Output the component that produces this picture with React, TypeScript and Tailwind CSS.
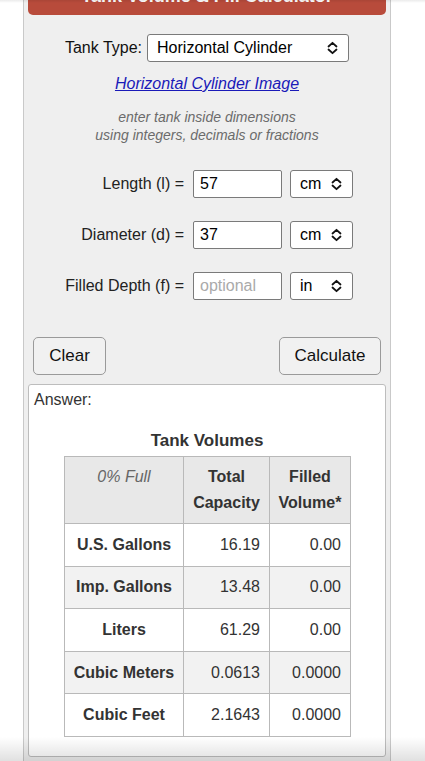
import React from "react";

const font = { fontFamily: '"Liberation Sans", Arial, sans-serif' };

function Chevrons() {
  return (
    <svg width="11" height="14" viewBox="0 0 11 14" fill="none" className="shrink-0">
      <path d="M1.5 5.5 L5.5 1.8 L9.5 5.5" stroke="#111" strokeWidth="1.8" strokeLinecap="round" strokeLinejoin="round" />
      <path d="M1.5 8.5 L5.5 12.2 L9.5 8.5" stroke="#111" strokeWidth="1.8" strokeLinecap="round" strokeLinejoin="round" />
    </svg>
  );
}

function FakeSelect({ value, className }: { value: string; className: string }) {
  return (
    <div
      className={`flex items-center justify-between bg-white border border-[#7a7a7a] rounded-[3px] text-[16px] text-black pl-[9px] pr-[10px] ${className}`}
    >
      <span>{value}</span>
      <Chevrons />
    </div>
  );
}

function DimRow({ label, value, unit }: { label: string; value: string; unit: string }) {
  return (
    <div className="flex items-center h-[28px] pl-[30px]">
      <span className="w-[130px] text-right text-[16px] text-[#222]">{label}</span>
      <div className="ml-[9px] w-[89px] h-[28px] bg-white border border-[#7a7a7a] rounded-[2px] flex items-center pl-[6px] text-[16px]">
        {value ? (
          <span className="text-black">{value}</span>
        ) : (
          <span className="text-[#aaaaaa]">optional</span>
        )}
      </div>
      <FakeSelect value={unit} className="ml-[8px] w-[63px] h-[28px]" />
    </div>
  );
}

const rows = [
  { name: "U.S. Gallons", total: "16.19", filled: "0.00", bg: "bg-white" },
  { name: "Imp. Gallons", total: "13.48", filled: "0.00", bg: "bg-[#f2f2f2]" },
  { name: "Liters", total: "61.29", filled: "0.00", bg: "bg-white" },
  { name: "Cubic Meters", total: "0.0613", filled: "0.0000", bg: "bg-[#f2f2f2]" },
  { name: "Cubic Feet", total: "2.1643", filled: "0.0000", bg: "bg-white" },
];

export default function App() {
  return (
    <div className="relative w-[425px] h-[761px] overflow-hidden bg-white" style={font}>
      {/* calculator panel */}
      <div className="ml-[23px] w-[368px] h-[800px] bg-[#efefef] border-x border-[#c9c9c9]">
        {/* header, top scrolled off */}
        <div className="mx-[4px] mt-[-19px] h-[34px] rounded-b-[5px] bg-[#b84b3b] pt-[5px] text-center text-[18px] leading-[20px] font-bold text-white">
          Tank Volume &amp; Fill Calculator
        </div>

        <div className="flex items-center justify-center mt-[19px] h-[28px]">
          <span className="text-[16px] text-[#111]">Tank Type:</span>
          <FakeSelect value="Horizontal Cylinder" className="ml-[5px] w-[202px] h-[28px]" />
        </div>

        <div className="mt-[12px] text-center text-[16px] italic underline text-[#1a1ab8] leading-[20px]">
          Horizontal Cylinder Image
        </div>

        <div className="mt-[14px] text-center text-[14px] italic text-[#6b6b6b] leading-[18px]">
          <div>enter tank inside dimensions</div>
          <div>using integers, decimals or fractions</div>
        </div>

        <div className="mt-[26px] flex flex-col gap-[23px]">
          <DimRow label="Length (l) =" value="57" unit="cm" />
          <DimRow label="Diameter (d) =" value="37" unit="cm" />
          <DimRow label="Filled Depth (f) =" value="" unit="in" />
        </div>

        <div className="mt-[37px] flex justify-between pl-[9px] pr-[9px]">
          <button className="w-[73px] h-[38px] bg-[#f1f1f1] border border-[#9a9a9a] rounded-[5px] text-[17px] text-[#111]">
            Clear
          </button>
          <button className="w-[102px] h-[38px] bg-[#f1f1f1] border border-[#9a9a9a] rounded-[5px] text-[17px] text-[#111]">
            Calculate
          </button>
        </div>

        {/* answer */}
        <div className="mx-[4px] mt-[9px] h-[373px] bg-white border border-[#bdbdbd] rounded-[3px]">
          <div className="pl-[5px] pt-[5px] text-[16px] leading-[20px] text-[#333]">Answer:</div>
          <div className="mt-[21px] text-center text-[17px] font-bold text-[#333] leading-[20px]">
            Tank Volumes
          </div>
          <table className="mt-[5px] ml-[35px] border-collapse text-[16px] text-[#333]">
            <thead>
              <tr className="bg-[#e8e8e8]">
                <th className="w-[119px] h-[67px] border border-[#b9b9b9] align-top py-[7px] leading-[26px] italic font-normal text-[#666]">
                  0% Full
                </th>
                <th className="w-[86px] h-[67px] border border-[#b9b9b9] align-top py-[7px] leading-[26px] font-bold">
                  Total
                  <br />
                  Capacity
                </th>
                <th className="w-[81px] h-[67px] border border-[#b9b9b9] align-top py-[7px] leading-[26px] font-bold">
                  Filled
                  <br />
                  Volume*
                </th>
              </tr>
            </thead>
            <tbody>
              {rows.map((r) => (
                <tr key={r.name} className={r.bg}>
                  <td className="h-[42.6px] border border-[#b9b9b9] text-center font-bold">{r.name}</td>
                  <td className="h-[42.6px] border border-[#b9b9b9] text-right pr-[9px]">{r.total}</td>
                  <td className="h-[42.6px] border border-[#b9b9b9] text-right pr-[9px]">{r.filled}</td>
                </tr>
              ))}
            </tbody>
          </table>
        </div>
      </div>

      {/* browser chrome shading */}
      <div className="pointer-events-none absolute inset-x-0 top-0 h-[3px] bg-gradient-to-b from-[#00000014] to-transparent" />
      <div className="pointer-events-none absolute inset-x-0 bottom-0 h-[24px] bg-gradient-to-b from-transparent to-[#0000001f]" />
    </div>
  );
}
